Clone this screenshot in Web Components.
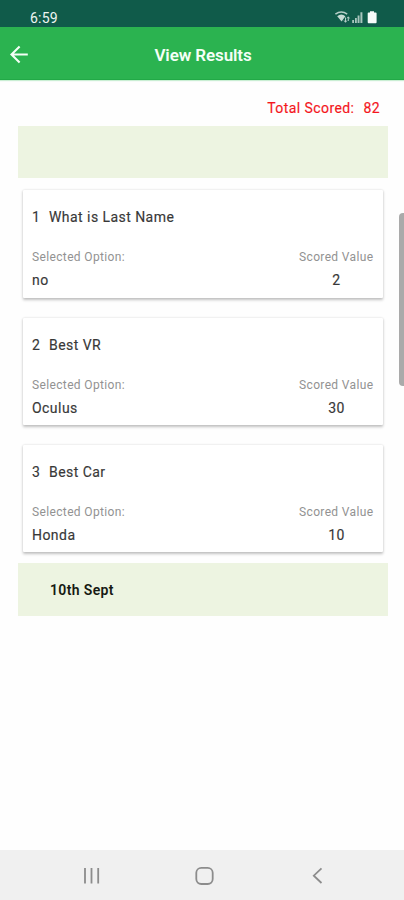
<!DOCTYPE html>
<html lang="en">
<head>
<meta charset="utf-8">
<title>View Results</title>
<style>
html, body { margin: 0; height: 100%; background: #fefefe; }
body { font-family: Roboto, "Liberation Sans", sans-serif; overflow: hidden; }
</style>
</head>
<body>
<results-screen></results-screen>
<script>
function define(name, html, setup) {
  customElements.define(name, class extends HTMLElement {
    connectedCallback() {
      if (this.shadowRoot) return;
      this.attachShadow({ mode: 'open' }).innerHTML = html;
      if (setup) setup(this, this.shadowRoot);
    }
  });
}

define('status-bar', `
<style>
:host { display: flex; box-sizing: border-box; height: 27px; padding: 7px 26px 0 30px; background: #105b4a; color: #eef5f2; justify-content: space-between; align-items: flex-start; }
span { font-size: 14px; line-height: 22px; letter-spacing: .2px; }
svg { display: block; margin-top: 3px; }
</style>
<span>6:59</span>
<svg width="44" height="15" viewBox="334 10 44 15">
  <path d="M335.4 14.2Q341.3 9.8 347.2 14.2" fill="none" stroke="#b5cec7" stroke-width="1.5"/>
  <path d="M337.2 16.2Q341.3 13 345.4 16.2L341.6 21.6Z" fill="#c6dad4"/>
  <path d="M345.5 17.5v4.6m-1.4-1.6l1.4 1.8 1.4-1.8M348.3 21v-4m-1.2 1.4l1.2-1.6 1.2 1.6" fill="none" stroke="#b5cec7" stroke-width="1"/>
  <path d="M352.2 20h1.8v3h-1.8zM355 18h1.8v5H355z" fill="#a9c5bd"/>
  <path d="M357.6 15.5h1.9V23h-1.9zM360.4 12.3h2V23h-2z" fill="#a9c5bd"/>
  <path d="M370 11.2h4v1.2h1.7q.9 0 .9.9v9q0 .9-.9.9h-7.1q-.9 0-.9-.9v-9q0-.9.9-.9h1.4z" fill="#f7fbf9"/>
</svg>`);

define('app-bar', `
<style>
:host { display: grid; grid-template-columns: 39px 1fr 37px; align-items: center; height: 53px; background: #2bb350; color: #f4fff6; box-shadow: inset 0 -1px #22a947, 0 1px 1px #c9eed3; }
svg { display: block; }
h1 { margin: 2px 0 0; font-size: 17px; font-weight: 600; line-height: 24px; letter-spacing: -.1px; text-align: center; }
</style>
<svg width="39" height="53" viewBox="0 27 39 53"><path d="M27.8 54.5H11.8M19.6 46.6L11.5 54.5L19.6 62.4" fill="none" stroke="#f4fff6" stroke-width="2.1"/></svg>
<h1><slot></slot></h1>`);

define('total-score', `
<style>
:host { display: flex; justify-content: flex-end; gap: 9px; box-sizing: border-box; height: 46px; padding: 18px 8px 0 0; font-size: 14px; font-weight: 400; line-height: 20px; letter-spacing: .42px; color: #f4161c; -webkit-text-stroke: .15px; }
</style>
<span>Total Scored:</span><span><slot></slot></span>`);

define('section-band', `
<style>
:host { display: flex; align-items: center; box-sizing: border-box; height: 53px; padding: 1px 32px 0; background: #edf4e1; font-size: 14px; font-weight: 600; letter-spacing: .35px; line-height: 20px; color: #161a12; }
:host([blank]) { height: 52px; }
</style>
<slot></slot>`);

define('result-card', `
<style>
:host { display: grid; grid-template-columns: 1fr 75px; grid-template-rows: 38px 22px 23px; align-content: start; box-sizing: border-box; height: 107.4px; margin: 0 5.5px 0 5px; padding: 17px 8.5px 0 9px; background: #fff; border-radius: 1px; box-shadow: 0 1.5px 3px rgba(0,0,0,.24), 0 0 2px rgba(0,0,0,.08); color: #383838; font-size: 14px; font-weight: 400; letter-spacing: .45px; line-height: 20px; -webkit-text-stroke: .15px; }
.title { grid-column: 1 / 3; display: flex; }
.num { width: 17px; }
.label { font-size: 12px; letter-spacing: .36px; color: #929292; align-self: end; white-space: nowrap; -webkit-text-stroke: 0; }
.value { align-self: end; }
.score { text-align: center; }
</style>
<div class="title"><span class="num"></span><slot></slot></div>
<div class="label">Selected Option:</div><div class="label">Scored Value</div>
<div class="value option"></div><div class="value score"></div>`, (host, root) => {
  root.querySelector('.num').textContent = host.getAttribute('number');
  root.querySelector('.option').textContent = host.getAttribute('option');
  root.querySelector('.score').textContent = host.getAttribute('score');
});

define('nav-bar', `
<style>
:host { display: block; height: 50px; background: #f0f0f0; }
svg { display: block; }
</style>
<svg width="404" height="50" viewBox="0 850 404 50" fill="none" stroke="#8c8c8c" stroke-width="1.8">
  <path d="M85 868v15.5M91.5 868v15.5M98.2 868v15.5"/>
  <rect x="196.3" y="867.8" width="16.4" height="16.2" rx="5"/>
  <path d="M321.5 868.3L313.8 875.7L321.5 883"/>
</svg>`);

define('scroll-thumb', `
<style>
:host { position: absolute; left: 399px; top: 213px; width: 5px; height: 173px; background: #aaa; border-radius: 4px 0 0 4px; }
</style>`);

define('results-screen', `
<style>
:host { display: flex; flex-direction: column; position: relative; width: 404px; height: 900px; overflow: hidden; }
main { flex: 1; padding: 0 16px 0 18px; }
.cards { display: flex; flex-direction: column; gap: 20px; padding: 12.2px 0 10.6px; }
</style>
<status-bar></status-bar>
<app-bar>View Results</app-bar>
<main>
  <total-score>82</total-score>
  <section-band blank></section-band>
  <div class="cards">
    <result-card number="1" option="no" score="2">What is Last Name</result-card>
    <result-card number="2" option="Oculus" score="30">Best VR</result-card>
    <result-card number="3" option="Honda" score="10">Best Car</result-card>
  </div>
  <section-band>10th Sept</section-band>
</main>
<nav-bar></nav-bar>
<scroll-thumb></scroll-thumb>`);
</script>
</body>
</html>
